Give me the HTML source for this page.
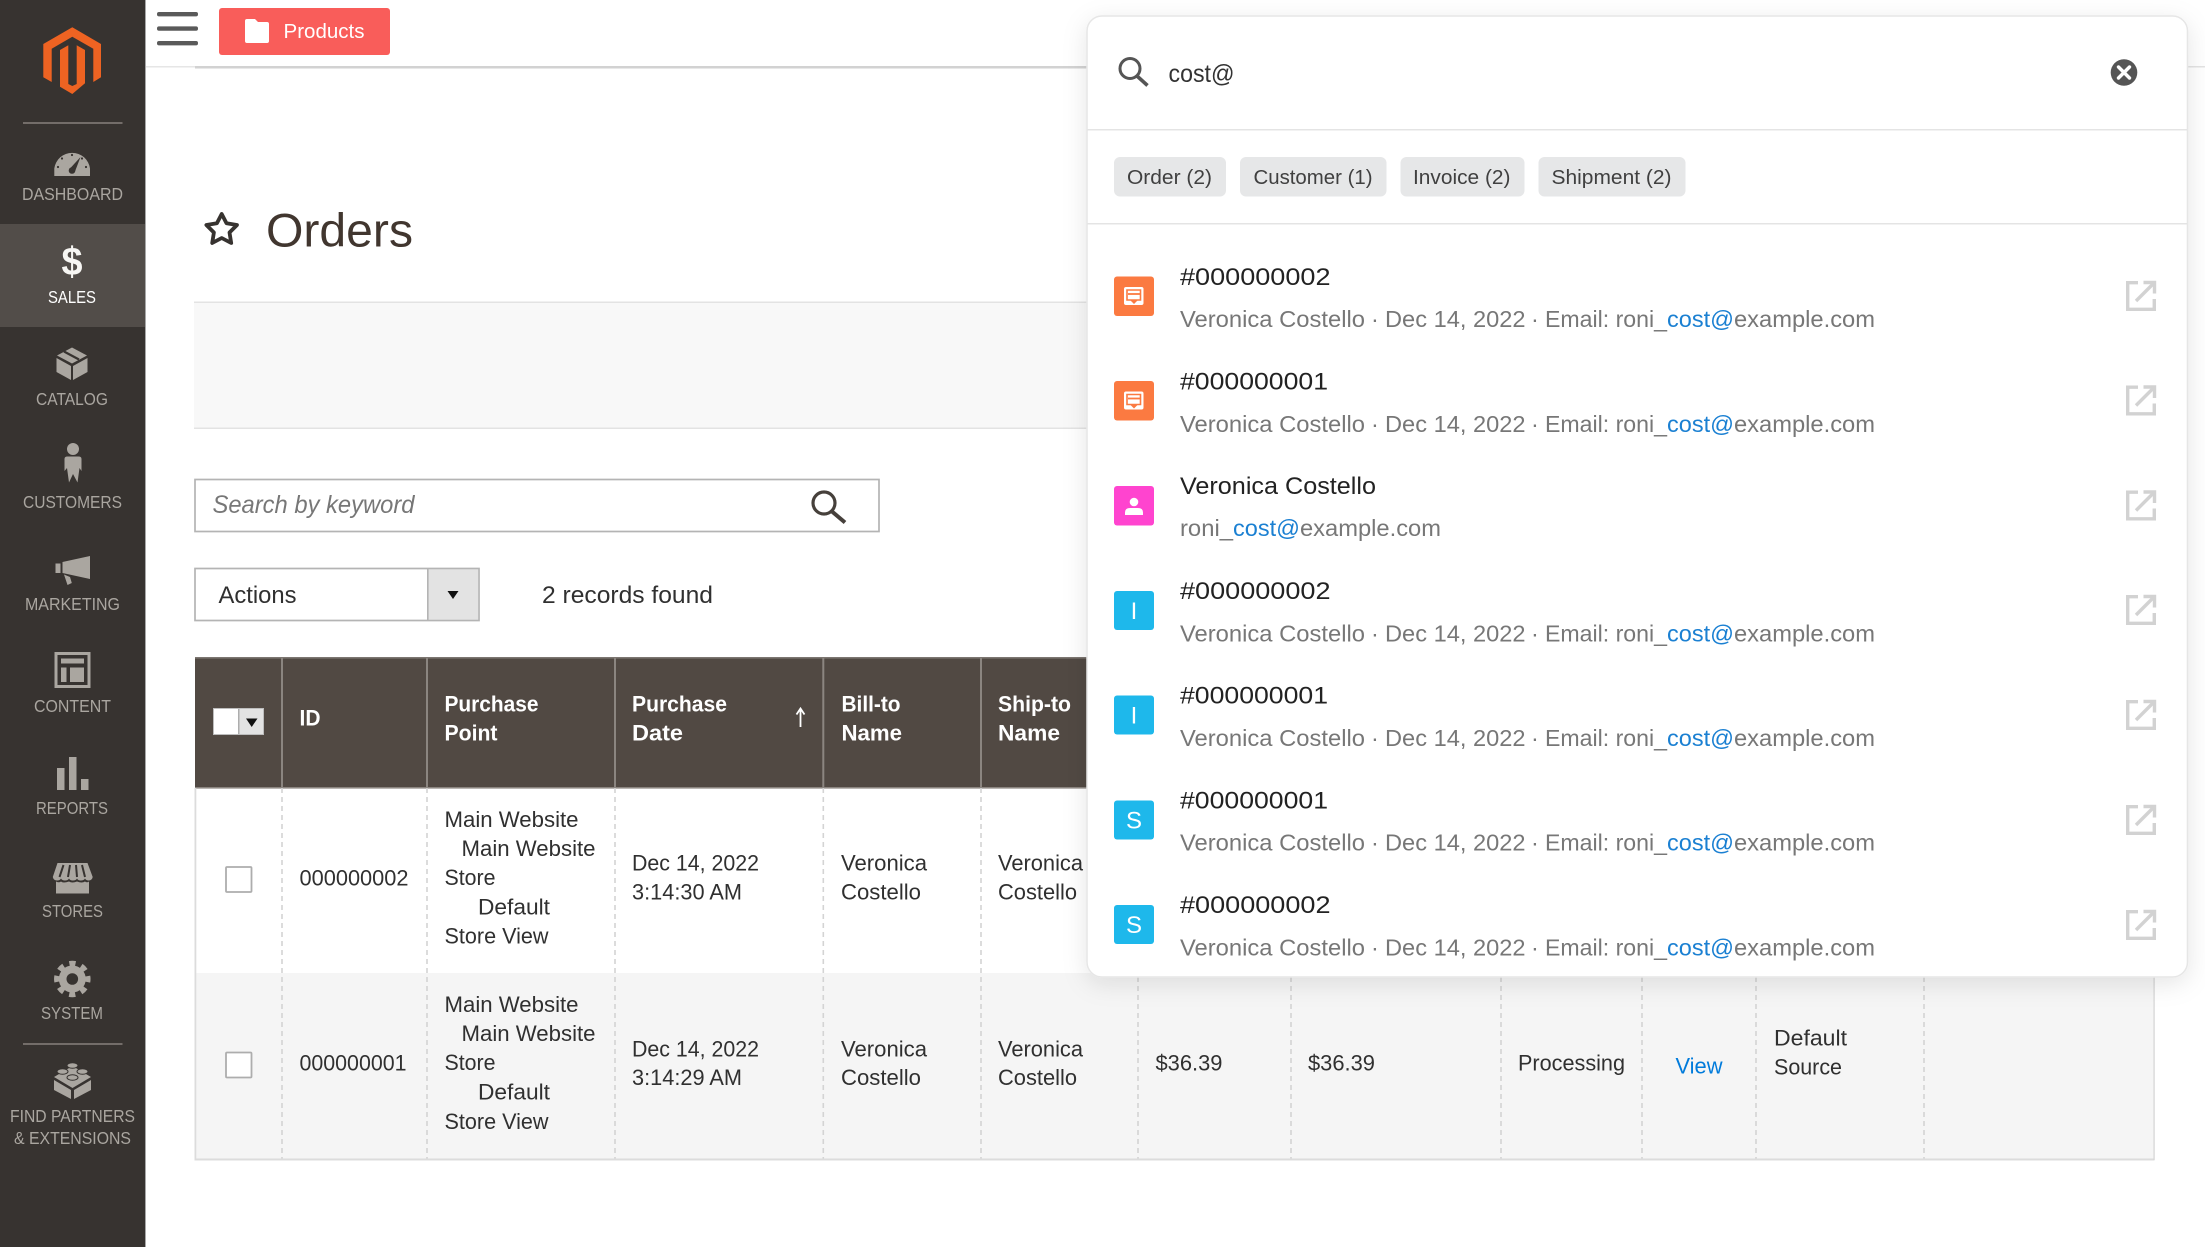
<!DOCTYPE html>
<html lang="en">
<head>
<meta charset="utf-8">
<title>Orders</title>
<style>
html,body{margin:0;padding:0;background:#fff;width:2205px;height:1247px;overflow:hidden}
svg{display:block}
text{font-family:"Liberation Sans",sans-serif;white-space:pre}
.nav{font-size:17.5px;fill:#aaa6a0}
.t{font-size:22.5px;fill:#303030}
.h{font-size:22.5px;fill:#fff;font-weight:700}
.ti{font-size:24px;fill:#222}
.su{font-size:23.5px;fill:#777}
.hl{font-size:23.5px;fill:#1b80d2}
.tab{font-size:20.5px;fill:#404040}
.ic{fill:#aaa6a0}
.dash{stroke:#d4d4d4;stroke-width:1.6;stroke-dasharray:5 4}
.sep{stroke:#8b8580;stroke-width:2}
.ext{fill:none;stroke:#d2d2d2;stroke-width:3.4}
</style>
</head>
<body>
<svg width="2205" height="1247" viewBox="0 0 2205 1247" xmlns="http://www.w3.org/2000/svg">
<defs>
<filter id="sh" x="-5%" y="-5%" width="110%" height="112%"><feDropShadow dx="0" dy="6" stdDeviation="12" flood-color="#000" flood-opacity=".1"/></filter>
<g id="ext"><path class="ext" d="M-3,-13.3H-13.3V13.3H13.3V3"/><path class="ext" d="M-5,5L12,-12"/><path class="ext" d="M2.5,-13.5H13.5V-2.5"/></g>
</defs>

<!-- top bar -->
<rect x="145" y="66" width="50" height="1.5" fill="#e6e6e6"/>
<rect x="195" y="66" width="900" height="2.5" fill="#d2d2d2"/>
<rect x="2180" y="66" width="25" height="1.5" fill="#e3e3e3"/>
<g fill="#5a5a5a">
<rect x="157" y="12" width="41" height="4.4" rx="2"/>
<rect x="157" y="26.4" width="41" height="4.4" rx="2"/>
<rect x="157" y="41" width="41" height="4.4" rx="2"/>
</g>
<rect x="219" y="8" width="171" height="47" rx="3" fill="#f95d5a"/>
<path d="M245,21a2,2 0 0 1 2,-2h8l3,3h9a2,2 0 0 1 2,2v17a2,2 0 0 1 -2,2h-20a2,2 0 0 1 -2,-2z" fill="#fff"/>
<text x="283.500" y="38" font-size="20.5" fill="#fff" textLength="81" lengthAdjust="spacingAndGlyphs">Products</text>

<!-- sidebar -->
<rect x="0" y="0" width="145" height="1247" fill="#373330"/>
<rect x="145" y="0" width="1" height="1247" fill="#a8a8a8"/>
<rect x="0" y="224" width="145" height="103" fill="#524d49"/>
<path fill="#ee6322" d="M72.3,27.3L101,44V77.3L93.3,82V48.7L72.3,36.7L51.7,48.7V82L43.3,77.3V44Z"/>
<path fill="#ee6322" d="M60,50L68.3,45.3V84L72.3,86L76.7,84V45.3L85,50V83.3L72.3,94L60,86.7Z"/>
<rect x="23" y="122" width="99.500" height="2" fill="#736d69"/>
<rect x="23" y="1043" width="99.500" height="2" fill="#736d69"/>

<path class="ic" d="M54.300,176V168.500A18,18 0 0 1 90,168.500V176Z"/>
<g fill="#373330"><path d="M70,168.500L80.500,157L75,171.500Z"/><circle cx="72" cy="170.500" r="3.300"/><circle cx="72" cy="155" r="1.100"/><circle cx="62" cy="158.500" r="1.100"/><circle cx="82" cy="158.500" r="1.100"/><circle cx="58" cy="167" r="1.100"/><circle cx="86" cy="167" r="1.100"/></g>
<text x="22" y="200" class="nav" textLength="101" lengthAdjust="spacingAndGlyphs">DASHBOARD</text>

<text x="61.500" y="275" font-size="40" font-weight="700" fill="#f7f6f3" textLength="21" lengthAdjust="spacingAndGlyphs">$</text>
<text x="48" y="303" class="nav" style="fill:#fff" textLength="48" lengthAdjust="spacingAndGlyphs">SALES</text>

<path class="ic" d="M72,347.500L87,355.500L72,363.500L57,355.500ZM87.500,358V372L73,380V366ZM56.500,358V372L71,380V366Z"/>
<path d="M64,351.500L79,359.500" stroke="#373330" stroke-width="2.200" fill="none"/>
<text x="36" y="405" class="nav" textLength="72" lengthAdjust="spacingAndGlyphs">CATALOG</text>

<circle class="ic" cx="73" cy="449" r="6"/>
<path class="ic" d="M64.500,459Q64.500,456.500 67.500,456.500H78.500Q81.500,456.500 81.500,459V471L79.500,468L77.500,482.500L73,474L69,482.500L67,468L64.500,471Z"/>
<text x="23" y="508" class="nav" textLength="99" lengthAdjust="spacingAndGlyphs">CUSTOMERS</text>

<path class="ic" d="M55.500,563.500H60.500V573H55.500ZM62.500,562L90,556V579L62.500,573ZM64,574.500L70,577L71.800,583L67.500,585Z"/>
<text x="25" y="610" class="nav" textLength="95" lengthAdjust="spacingAndGlyphs">MARKETING</text>

<rect x="56" y="653.500" width="33" height="33" fill="none" stroke="#aaa6a0" stroke-width="3"/>
<path class="ic" d="M61,658.500H84V663.500H61ZM61,667.500H66.500V682H61ZM70,667.500H84V682H70Z"/>
<text x="34" y="712" class="nav" textLength="77" lengthAdjust="spacingAndGlyphs">CONTENT</text>

<path class="ic" d="M57,768H64.500V790H57ZM69,757H76.500V790H69ZM81,779H88.500V790H81Z"/>
<text x="36" y="814" class="nav" textLength="72" lengthAdjust="spacingAndGlyphs">REPORTS</text>

<path class="ic" d="M57.500,863H87.500L92.700,877Q92,880.500 88.700,880.500Q86,880.500 85,878.500Q84,880.500 80.700,880.500Q78,880.500 77,878.500Q76,880.500 72.800,880.500Q70,880.500 69,878.500Q68,880.500 65,880.500Q62,880.500 61,878.500Q60,880.500 57,880.500Q53.500,880.500 52.800,877ZM56,881.500Q59,883 61,881.500Q63,883.500 69,881.500Q72,883.500 77,881.500Q82,883.500 85,881.500Q87,883 89,881.500V893.500H56Z"/>
<path d="M63.500,865L59.500,877M70,865L68,877M76,865L77,877M82,865L85,877" stroke="#373330" stroke-width="2" fill="none"/>
<text x="42" y="917" class="nav" textLength="61" lengthAdjust="spacingAndGlyphs">STORES</text>

<circle class="ic" cx="72.300" cy="979" r="13.500"/>
<circle cx="72.300" cy="979" r="15.500" fill="none" stroke="#aaa6a0" stroke-width="5.500" stroke-dasharray="6.100 6.070" stroke-dashoffset="3"/>
<circle cx="72.300" cy="979" r="5.800" fill="#373330"/>
<text x="41" y="1019" class="nav" textLength="62" lengthAdjust="spacingAndGlyphs">SYSTEM</text>

<path class="ic" d="M72.500,1066L91,1077L72.500,1088L54,1077ZM54,1080L71,1090V1099L54,1090ZM91,1080L74,1090V1099L91,1090Z"/>
<g class="ic" stroke="#373330" stroke-width="1"><ellipse cx="72.500" cy="1065.500" rx="5.500" ry="2.800"/><ellipse cx="62.500" cy="1071.500" rx="5.500" ry="2.800"/><ellipse cx="82.500" cy="1071.500" rx="5.500" ry="2.800"/><ellipse cx="72.500" cy="1077.500" rx="5.500" ry="2.800"/></g>
<text x="10" y="1122" class="nav" textLength="125" lengthAdjust="spacingAndGlyphs">FIND PARTNERS</text>
<text x="14" y="1144" class="nav" textLength="117" lengthAdjust="spacingAndGlyphs">&amp; EXTENSIONS</text>

<!-- page title -->
<polygon points="221.700,214 226.500,223.300 237,225 229.500,232.500 231.200,243 221.700,238 212.200,243 213.900,232.500 206.400,225 216.900,223.300" fill="none" stroke="#373330" stroke-width="3.800" stroke-linejoin="round"/>
<text x="266" y="246.300" font-size="47" fill="#41362f" textLength="147" lengthAdjust="spacingAndGlyphs">Orders</text>

<!-- band -->
<rect x="194" y="302" width="900" height="127" fill="#f8f8f8"/>
<rect x="194" y="301.500" width="900" height="1.500" fill="#e3e3e3"/>
<rect x="194" y="427.500" width="900" height="1.500" fill="#e3e3e3"/>

<!-- search -->
<rect x="195" y="479.500" width="684" height="52" fill="#fff" stroke="#b4b4b4" stroke-width="1.700"/>
<text x="212.500" y="513" font-size="25" font-style="italic" fill="#777" textLength="202" lengthAdjust="spacingAndGlyphs">Search by keyword</text>
<circle cx="824" cy="503" r="11" fill="none" stroke="#46403b" stroke-width="3.200"/>
<path d="M832,511.500L845,522.500" stroke="#46403b" stroke-width="4" fill="none"/>

<!-- actions -->
<rect x="195" y="568.500" width="284" height="52" fill="#fff" stroke="#b4b4b4" stroke-width="1.700"/>
<rect x="427.500" y="569.500" width="50.500" height="50" fill="#e3e3e3"/>
<rect x="427" y="569" width="1.600" height="51" fill="#b4b4b4"/>
<path d="M447.500,591H458.500L453,599Z" fill="#111"/>
<text x="218.500" y="603" font-size="24" fill="#303030" textLength="78" lengthAdjust="spacingAndGlyphs">Actions</text>
<text x="542" y="603" font-size="24" fill="#303030" textLength="171" lengthAdjust="spacingAndGlyphs">2 records found</text>

<!-- table -->
<rect x="195" y="788" width="1960" height="185" fill="#fff"/>
<rect x="195" y="973" width="1959" height="186" fill="#f5f5f5"/>
<rect x="195" y="657.500" width="1959" height="131" fill="#514943"/>
<rect x="195" y="657" width="1959" height="1.600" fill="#7c7671"/>
<rect x="195" y="787" width="1959" height="1.600" fill="#8b8580"/>
<path class="sep" d="M282,658V788M427,658V788M615,658V788M823.300,658V788M981,658V788M1138,658V788"/>
<path class="dash" d="M282,788V1159M427,788V1159M615,788V1159M823.300,788V1159M981,788V1159M1138,788V1159M1291,788V1159M1501,788V1159M1642,788V1159M1756,788V1159M1924,788V1159"/>
<rect x="194.500" y="788" width="1.800" height="372" fill="#dcdcdc"/>
<rect x="194.500" y="1158.500" width="1960" height="2" fill="#dcdcdc"/>
<rect x="2153.500" y="788" width="1.200" height="372" fill="#d4d4d4"/>

<!-- header cells -->
<rect x="213" y="708" width="51" height="27" fill="#e3e3e3"/>
<rect x="213" y="708" width="25" height="27" fill="#fff"/>
<rect x="238" y="708" width="1.500" height="27" fill="#adadad"/>
<rect x="213.500" y="708.500" width="50" height="26" fill="none" stroke="#bdbdbd" stroke-width="1"/>
<path d="M246,718.500H257.500L251.700,727Z" fill="#111"/>
<text x="299.500" y="725.500" class="h" textLength="21" lengthAdjust="spacingAndGlyphs">ID</text>
<text x="444.500" y="711.500" class="h" textLength="94" lengthAdjust="spacingAndGlyphs">Purchase</text>
<text x="444.500" y="740.500" class="h" textLength="53" lengthAdjust="spacingAndGlyphs">Point</text>
<text x="632" y="711.500" class="h" textLength="95" lengthAdjust="spacingAndGlyphs">Purchase</text>
<text x="632" y="740.500" class="h" textLength="51" lengthAdjust="spacingAndGlyphs">Date</text>
<path d="M800.500,727V709M796.500,714.500L800.500,708.500L804.500,714.500" fill="none" stroke="#fff" stroke-width="1.800"/>
<text x="841.500" y="711.500" class="h" textLength="59" lengthAdjust="spacingAndGlyphs">Bill-to</text>
<text x="841.500" y="740.500" class="h" textLength="60.500" lengthAdjust="spacingAndGlyphs">Name</text>
<text x="998" y="711.500" class="h" textLength="73" lengthAdjust="spacingAndGlyphs">Ship-to</text>
<text x="998" y="740.500" class="h" textLength="62" lengthAdjust="spacingAndGlyphs">Name</text>

<!-- row 1 -->
<rect x="226" y="867" width="25.500" height="25" rx="1" fill="#fff" stroke="#adadad" stroke-width="1.800"/>
<text x="299.500" y="885.500" class="t" textLength="109" lengthAdjust="spacingAndGlyphs">000000002</text>
<text x="444.500" y="827" class="t" textLength="134" lengthAdjust="spacingAndGlyphs">Main Website</text>
<text x="461.500" y="856" class="t" textLength="134" lengthAdjust="spacingAndGlyphs">Main Website</text>
<text x="444.500" y="885" class="t" textLength="51" lengthAdjust="spacingAndGlyphs">Store</text>
<text x="478" y="914.500" class="t" textLength="72" lengthAdjust="spacingAndGlyphs">Default</text>
<text x="444.500" y="943.500" class="t" textLength="104" lengthAdjust="spacingAndGlyphs">Store View</text>
<text x="632" y="870.500" class="t" textLength="127" lengthAdjust="spacingAndGlyphs">Dec 14, 2022</text>
<text x="632" y="899.500" class="t" textLength="110" lengthAdjust="spacingAndGlyphs">3:14:30 AM</text>
<text x="841" y="870.500" class="t" textLength="86" lengthAdjust="spacingAndGlyphs">Veronica</text>
<text x="841" y="899.500" class="t" textLength="80" lengthAdjust="spacingAndGlyphs">Costello</text>
<text x="998" y="870.500" class="t" textLength="85" lengthAdjust="spacingAndGlyphs">Veronica</text>
<text x="998" y="899.500" class="t" textLength="79" lengthAdjust="spacingAndGlyphs">Costello</text>

<!-- row 2 -->
<rect x="226" y="1052.500" width="25.500" height="25" rx="1" fill="#fff" stroke="#adadad" stroke-width="1.800"/>
<text x="299.500" y="1070.500" class="t" textLength="107" lengthAdjust="spacingAndGlyphs">000000001</text>
<text x="444.500" y="1012" class="t" textLength="134" lengthAdjust="spacingAndGlyphs">Main Website</text>
<text x="461.500" y="1041" class="t" textLength="134" lengthAdjust="spacingAndGlyphs">Main Website</text>
<text x="444.500" y="1070" class="t" textLength="51" lengthAdjust="spacingAndGlyphs">Store</text>
<text x="478" y="1099.500" class="t" textLength="72" lengthAdjust="spacingAndGlyphs">Default</text>
<text x="444.500" y="1129" class="t" textLength="104" lengthAdjust="spacingAndGlyphs">Store View</text>
<text x="632" y="1056.500" class="t" textLength="127" lengthAdjust="spacingAndGlyphs">Dec 14, 2022</text>
<text x="632" y="1085" class="t" textLength="110" lengthAdjust="spacingAndGlyphs">3:14:29 AM</text>
<text x="841" y="1056.500" class="t" textLength="86" lengthAdjust="spacingAndGlyphs">Veronica</text>
<text x="841" y="1085" class="t" textLength="80" lengthAdjust="spacingAndGlyphs">Costello</text>
<text x="998" y="1056.500" class="t" textLength="85" lengthAdjust="spacingAndGlyphs">Veronica</text>
<text x="998" y="1085" class="t" textLength="79" lengthAdjust="spacingAndGlyphs">Costello</text>
<text x="1155.500" y="1070.500" class="t" textLength="67" lengthAdjust="spacingAndGlyphs">$36.39</text>
<text x="1308" y="1070.500" class="t" textLength="67" lengthAdjust="spacingAndGlyphs">$36.39</text>
<text x="1518" y="1070.500" class="t" textLength="107" lengthAdjust="spacingAndGlyphs">Processing</text>
<text x="1675.500" y="1073.500" class="t" style="fill:#007bdb" textLength="47" lengthAdjust="spacingAndGlyphs">View</text>
<text x="1774" y="1045.500" class="t" textLength="73" lengthAdjust="spacingAndGlyphs">Default</text>
<text x="1774" y="1074.500" class="t" textLength="68" lengthAdjust="spacingAndGlyphs">Source</text>

<!-- search panel -->
<rect x="1087" y="16" width="1100.500" height="961" rx="15" fill="#fff" stroke="#e6e6e6" stroke-width="1.500" filter="url(#sh)"/>
<circle cx="1130" cy="68.500" r="10" fill="none" stroke="#555" stroke-width="3"/>
<path d="M1137,76L1147.500,85.500" stroke="#555" stroke-width="3.600" fill="none"/>
<text x="1168.500" y="82" font-size="25" fill="#333" textLength="66" lengthAdjust="spacingAndGlyphs">cost@</text>
<circle cx="2124" cy="72.500" r="13.300" fill="#555"/>
<path d="M2118.500,67L2129.500,78M2129.500,67L2118.500,78" stroke="#fff" stroke-width="3.400" stroke-linecap="round"/>
<rect x="1087.500" y="129" width="1099.500" height="1.500" fill="#e4e4e4"/>
<rect x="1087.500" y="223" width="1099.500" height="1.500" fill="#e4e4e4"/>

<!-- tabs -->
<g fill="#e6e7e8">
<rect x="1114" y="157" width="112" height="39.500" rx="6"/>
<rect x="1240" y="157" width="146.500" height="39.500" rx="6"/>
<rect x="1400.500" y="157" width="124" height="39.500" rx="6"/>
<rect x="1538.500" y="157" width="147" height="39.500" rx="6"/>
</g>
<text x="1127" y="184" class="tab" textLength="85" lengthAdjust="spacingAndGlyphs">Order (2)</text>
<text x="1253.500" y="184" class="tab" textLength="119" lengthAdjust="spacingAndGlyphs">Customer (1)</text>
<text x="1413" y="184" class="tab" textLength="97.500" lengthAdjust="spacingAndGlyphs">Invoice (2)</text>
<text x="1551.500" y="184" class="tab" textLength="120" lengthAdjust="spacingAndGlyphs">Shipment (2)</text>

<!-- result 1 -->
<rect x="1114" y="276.500" width="40" height="39.500" rx="3" fill="#fb7a41"/>
<path d="M1124,289a2,2 0 0 1 2,-2h15.500a2,2 0 0 1 2,2v14a2,2 0 0 1 -2,2h-15.500a2,2 0 0 1 -2,-2z" fill="#fff"/>
<path d="M1127,290H1140.500V300H1127Z" fill="none" stroke="#fb7a41" stroke-width="1.600"/>
<path d="M1128,294H1140" stroke="#fb7a41" stroke-width="1.800"/>
<path d="M1130,300H1138L1134,304Z" fill="#fb7a41"/>
<text x="1180" y="285" class="ti" textLength="150.500" lengthAdjust="spacingAndGlyphs">#000000002</text>
<text x="1180" y="327" class="su" textLength="185" lengthAdjust="spacingAndGlyphs">Veronica Costello</text>
<text x="1371" y="327" class="su">·</text>
<text x="1385" y="327" class="su" textLength="140.500" lengthAdjust="spacingAndGlyphs">Dec 14, 2022</text>
<text x="1531" y="327" class="su">·</text>
<text x="1545" y="327" class="su" textLength="122" lengthAdjust="spacingAndGlyphs">Email: roni_</text>
<text x="1667" y="327" class="hl" textLength="67" lengthAdjust="spacingAndGlyphs">cost@</text>
<text x="1734" y="327" class="su" textLength="141" lengthAdjust="spacingAndGlyphs">example.com</text>
<use href="#ext" x="2141" y="296"/>

<!-- result 2 -->
<rect x="1114" y="381" width="40" height="39.500" rx="3" fill="#fb7a41"/>
<path d="M1124,393.500a2,2 0 0 1 2,-2h15.500a2,2 0 0 1 2,2v14a2,2 0 0 1 -2,2h-15.500a2,2 0 0 1 -2,-2z" fill="#fff"/>
<path d="M1127,394.500H1140.500V404.500H1127Z" fill="none" stroke="#fb7a41" stroke-width="1.600"/>
<path d="M1128,398.500H1140" stroke="#fb7a41" stroke-width="1.800"/>
<path d="M1130,404.500H1138L1134,408.500Z" fill="#fb7a41"/>
<text x="1180" y="389.500" class="ti" textLength="148" lengthAdjust="spacingAndGlyphs">#000000001</text>
<text x="1180" y="432" class="su" textLength="185" lengthAdjust="spacingAndGlyphs">Veronica Costello</text>
<text x="1371" y="432" class="su">·</text>
<text x="1385" y="432" class="su" textLength="140.500" lengthAdjust="spacingAndGlyphs">Dec 14, 2022</text>
<text x="1531" y="432" class="su">·</text>
<text x="1545" y="432" class="su" textLength="122" lengthAdjust="spacingAndGlyphs">Email: roni_</text>
<text x="1667" y="432" class="hl" textLength="67" lengthAdjust="spacingAndGlyphs">cost@</text>
<text x="1734" y="432" class="su" textLength="141" lengthAdjust="spacingAndGlyphs">example.com</text>
<use href="#ext" x="2141" y="400.500"/>

<!-- result 3 -->
<rect x="1114" y="486" width="40" height="39.500" rx="3" fill="#ff44cf"/>
<circle cx="1134" cy="502" r="4.300" fill="#fff"/>
<path d="M1125,515V512.500Q1125,508 1130,508H1138Q1143,508 1143,512.500V515Z" fill="#fff"/>
<text x="1180" y="494" class="ti" textLength="196" lengthAdjust="spacingAndGlyphs">Veronica Costello</text>
<text x="1180" y="536" class="su" textLength="53" lengthAdjust="spacingAndGlyphs">roni_</text>
<text x="1233" y="536" class="hl" textLength="67" lengthAdjust="spacingAndGlyphs">cost@</text>
<text x="1300" y="536" class="su" textLength="141" lengthAdjust="spacingAndGlyphs">example.com</text>
<use href="#ext" x="2141" y="505.500"/>

<!-- result 4 -->
<rect x="1114" y="591" width="40" height="39" rx="3" fill="#1eb8eb"/>
<text x="1134" y="619" text-anchor="middle" font-size="24" fill="#fff">I</text>
<text x="1180" y="599" class="ti" textLength="150.500" lengthAdjust="spacingAndGlyphs">#000000002</text>
<text x="1180" y="641.500" class="su" textLength="185" lengthAdjust="spacingAndGlyphs">Veronica Costello</text>
<text x="1371" y="641.500" class="su">·</text>
<text x="1385" y="641.500" class="su" textLength="140.500" lengthAdjust="spacingAndGlyphs">Dec 14, 2022</text>
<text x="1531" y="641.500" class="su">·</text>
<text x="1545" y="641.500" class="su" textLength="122" lengthAdjust="spacingAndGlyphs">Email: roni_</text>
<text x="1667" y="641.500" class="hl" textLength="67" lengthAdjust="spacingAndGlyphs">cost@</text>
<text x="1734" y="641.500" class="su" textLength="141" lengthAdjust="spacingAndGlyphs">example.com</text>
<use href="#ext" x="2141" y="610"/>

<!-- result 5 -->
<rect x="1114" y="695.500" width="40" height="39" rx="3" fill="#1eb8eb"/>
<text x="1134" y="723.500" text-anchor="middle" font-size="24" fill="#fff">I</text>
<text x="1180" y="703.500" class="ti" textLength="148" lengthAdjust="spacingAndGlyphs">#000000001</text>
<text x="1180" y="746" class="su" textLength="185" lengthAdjust="spacingAndGlyphs">Veronica Costello</text>
<text x="1371" y="746" class="su">·</text>
<text x="1385" y="746" class="su" textLength="140.500" lengthAdjust="spacingAndGlyphs">Dec 14, 2022</text>
<text x="1531" y="746" class="su">·</text>
<text x="1545" y="746" class="su" textLength="122" lengthAdjust="spacingAndGlyphs">Email: roni_</text>
<text x="1667" y="746" class="hl" textLength="67" lengthAdjust="spacingAndGlyphs">cost@</text>
<text x="1734" y="746" class="su" textLength="141" lengthAdjust="spacingAndGlyphs">example.com</text>
<use href="#ext" x="2141" y="715"/>

<!-- result 6 -->
<rect x="1114" y="800.500" width="40" height="39" rx="3" fill="#1eb8eb"/>
<text x="1134" y="828.500" text-anchor="middle" font-size="24" fill="#fff">S</text>
<text x="1180" y="808.300" class="ti" textLength="148" lengthAdjust="spacingAndGlyphs">#000000001</text>
<text x="1180" y="850.500" class="su" textLength="185" lengthAdjust="spacingAndGlyphs">Veronica Costello</text>
<text x="1371" y="850.500" class="su">·</text>
<text x="1385" y="850.500" class="su" textLength="140.500" lengthAdjust="spacingAndGlyphs">Dec 14, 2022</text>
<text x="1531" y="850.500" class="su">·</text>
<text x="1545" y="850.500" class="su" textLength="122" lengthAdjust="spacingAndGlyphs">Email: roni_</text>
<text x="1667" y="850.500" class="hl" textLength="67" lengthAdjust="spacingAndGlyphs">cost@</text>
<text x="1734" y="850.500" class="su" textLength="141" lengthAdjust="spacingAndGlyphs">example.com</text>
<use href="#ext" x="2141" y="820"/>

<!-- result 7 -->
<rect x="1114" y="905" width="40" height="39" rx="3" fill="#1eb8eb"/>
<text x="1134" y="933" text-anchor="middle" font-size="24" fill="#fff">S</text>
<text x="1180" y="913" class="ti" textLength="150.500" lengthAdjust="spacingAndGlyphs">#000000002</text>
<text x="1180" y="955.500" class="su" textLength="185" lengthAdjust="spacingAndGlyphs">Veronica Costello</text>
<text x="1371" y="955.500" class="su">·</text>
<text x="1385" y="955.500" class="su" textLength="140.500" lengthAdjust="spacingAndGlyphs">Dec 14, 2022</text>
<text x="1531" y="955.500" class="su">·</text>
<text x="1545" y="955.500" class="su" textLength="122" lengthAdjust="spacingAndGlyphs">Email: roni_</text>
<text x="1667" y="955.500" class="hl" textLength="67" lengthAdjust="spacingAndGlyphs">cost@</text>
<text x="1734" y="955.500" class="su" textLength="141" lengthAdjust="spacingAndGlyphs">example.com</text>
<use href="#ext" x="2141" y="925"/>
</svg>
</body>
</html>
